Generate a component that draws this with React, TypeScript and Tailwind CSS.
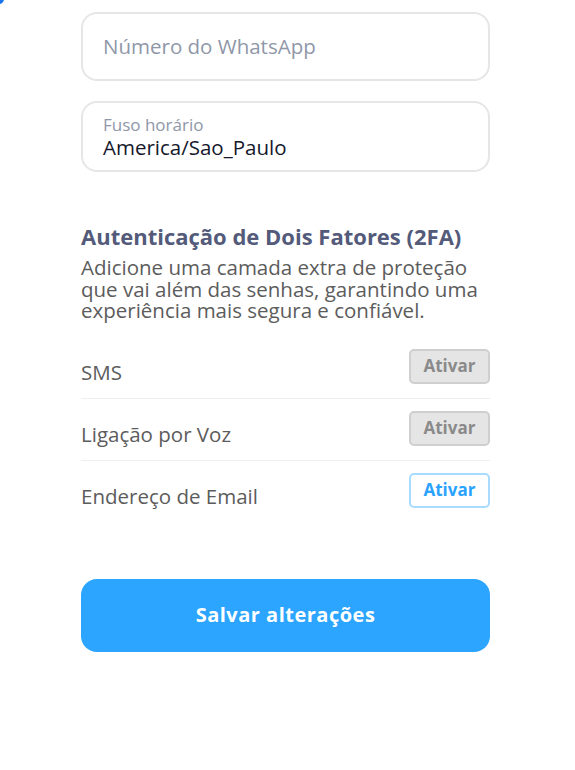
import React from "react";

const font = { fontFamily: "'Open Sans', 'Noto Sans', sans-serif" };

function Row({ label, active, last }: { label: string; active?: boolean; last?: boolean }) {
  return (
    <div className={`flex items-start justify-between pt-[12px] pb-[14px] ${last ? "" : "border-b border-[#eeeeee]"}`}>
      <span className="mt-[11px] text-[20.5px] leading-[24px] text-[#5c5c5c] font-medium">{label}</span>
      {active ? (
        <button className="h-[35px] w-[81px] rounded-[5px] border-2 border-[#a9dbff] bg-white text-[17px] font-bold text-[#2aa3ff]">
          Ativar
        </button>
      ) : (
        <button className="h-[35px] w-[81px] rounded-[5px] border-2 border-[#cfcfcf] bg-[#e5e5e5] text-[17px] font-bold text-[#8a8a8a]">
          Ativar
        </button>
      )}
    </div>
  );
}

export default function App() {
  return (
    <div className="relative min-h-[770px] w-[575px] bg-white" style={font}>
      <div className="absolute left-[-6px] top-[-6px] h-[10px] w-[10px] rounded-full bg-[#1a73e8]" />
      <div className="ml-[81px] flex w-[409px] flex-col pt-[12px]">
        <div className="flex h-[69px] items-center rounded-[16px] border-2 border-[#e6e6e6] px-[20px]">
          <span className="text-[20.5px] text-[#8f97a8]">Número do WhatsApp</span>
        </div>
        <div className="mt-[20px] flex h-[71px] flex-col justify-center rounded-[16px] border-2 border-[#e6e6e6] px-[20px]">
          <span className="text-[17px] leading-[19px] text-[#8f97a8]">Fuso horário</span>
          <span className="mt-[1px] text-[20.5px] leading-[24px] font-medium text-[#15182b]">America/Sao_Paulo</span>
        </div>
        <h2 className="mt-[50px] text-[22px] font-bold leading-[28px] text-[#535a7a]">
          Autenticação de Dois Fatores (2FA)
        </h2>
        <p className="mt-[7px] text-[20.5px] leading-[21.5px] font-medium text-[#5c5c5c]">
          Adicione uma camada extra de proteção que vai além das senhas, garantindo uma experiência mais segura e confiável.
        </p>
        <div className="mt-[15px] flex flex-col">
          <Row label="SMS" />
          <Row label="Ligação por Voz" />
          <Row label="Endereço de Email" active last />
        </div>
        <button className="mt-[57px] h-[73px] w-full rounded-[16px] bg-[#2ba5ff] text-[20px] font-bold tracking-[0.5px] text-white">
          Salvar alterações
        </button>
      </div>
    </div>
  );
}
